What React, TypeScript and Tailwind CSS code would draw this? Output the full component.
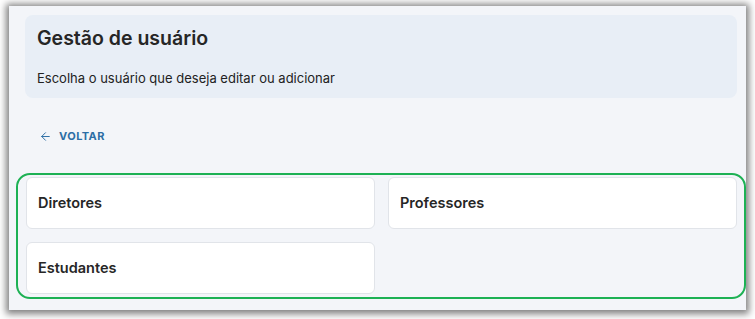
import React from "react";
import { ArrowLeft } from "lucide-react";

const groups = ["Diretores", "Professores", "Estudantes"];

export default function App() {
  return (
    <div className="h-[319px] w-[755px] overflow-hidden bg-white pl-[9px] pr-[9px] pt-[6px] font-['Inter',sans-serif]">
      <div className="h-[304px] w-[737px] bg-[#f3f5f9] pt-[9px] shadow-[0_1px_7px_3px_rgba(0,0,0,0.5)]">
        <div className="ml-[16px] mr-[9px] h-[83px] rounded-[8px] bg-[#e8eef6] px-[12px] pt-[9px]">
          <h1 className="text-[19.5px] font-semibold leading-[28px] text-[#262626]">Gestão de usuário</h1>
          <p className="mt-[16px] text-[13px] leading-[20px] text-[#222]">
            Escolha o usuário que deseja editar ou adicionar
          </p>
        </div>

        <button className="ml-[30px] mt-[30px] flex h-[16px] items-center gap-[7px] text-[#2c6ea5]">
          <ArrowLeft size={13} strokeWidth={1.8} />
          <span className="text-[11px] font-bold tracking-[0.04em]">VOLTAR</span>
        </button>

        <div className="ml-[7px] mt-[29px] w-[730px] rounded-[14px] border-2 border-[#1db154] pb-[3px] pl-[8px] pr-[7px] pt-[2px]">
          <div className="grid grid-cols-2 gap-[13px]">
            {groups.map((g) => (
              <div
                key={g}
                className="flex h-[52px] items-center rounded-[6px] border border-[#e1e4e9] bg-white px-[11px]"
              >
                <span className="text-[14.5px] font-semibold text-[#262626]">{g}</span>
              </div>
            ))}
          </div>
        </div>
      </div>
    </div>
  );
}
